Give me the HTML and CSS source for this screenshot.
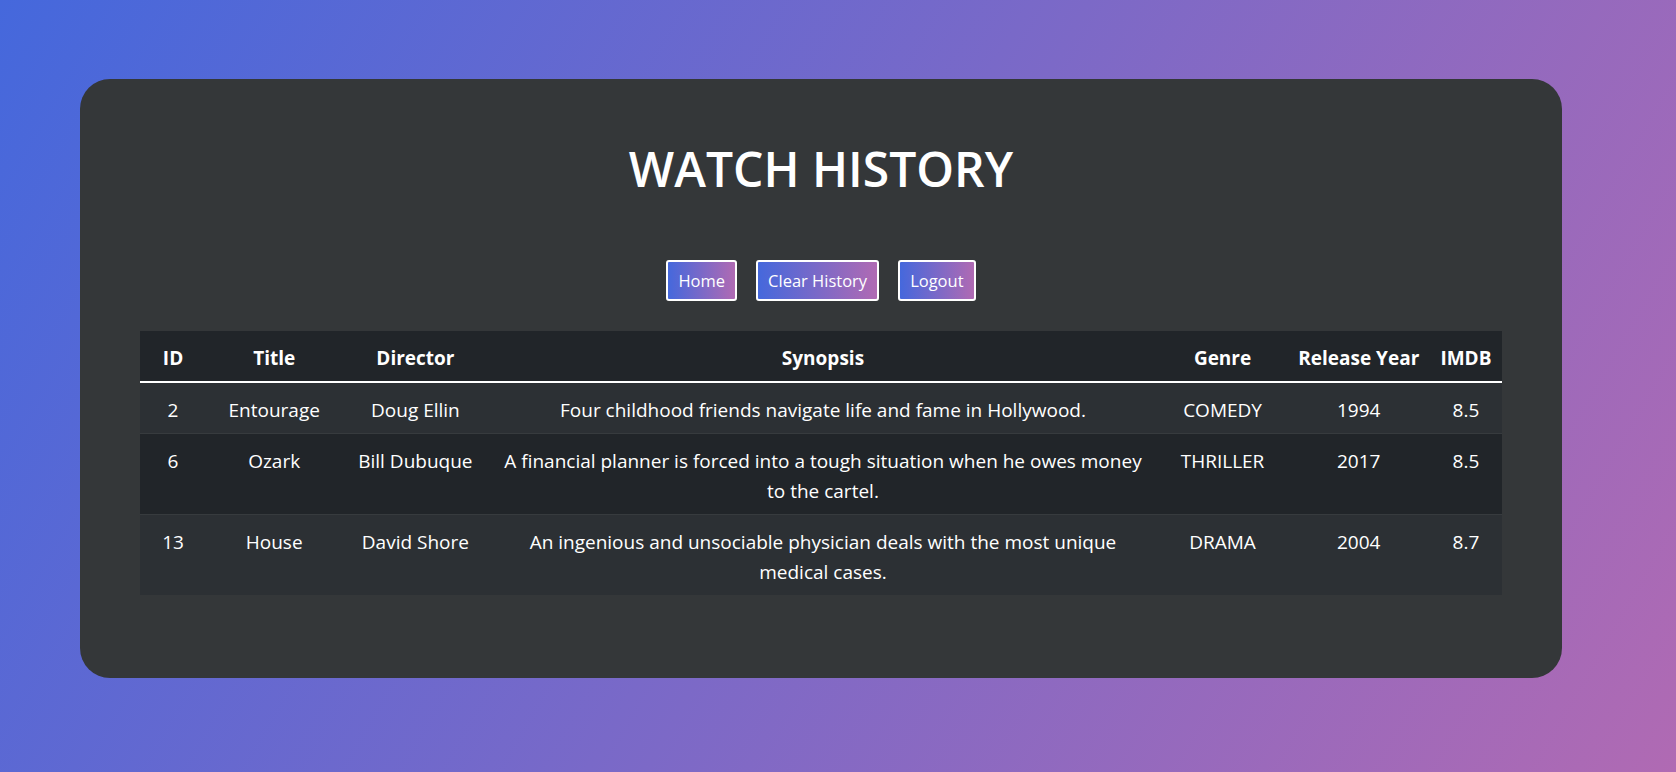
FILE: index.html
```html
<!DOCTYPE html>
<html lang="en">
<head>
  <meta charset="UTF-8" />
  <meta name="viewport" content="width=device-width, initial-scale=1.0" />
  <title>Watch History</title>
  <link rel="stylesheet" href="styles.css">
</head>
<body>
<div class="card">
  <h1>WATCH HISTORY</h1>

  <!-- Navigasi -->
  <div class="actions">
    <button class="btn">Home</button>
    <button class="btn">Clear History</button>
    <button class="btn">Logout</button>
  </div>

  <table class="history">
    <colgroup>
      <col class="c-id"><col class="c-title"><col class="c-dir"><col class="c-syn"><col class="c-genre"><col class="c-year"><col class="c-imdb">
    </colgroup>
    <thead>
      <tr><th>ID</th><th>Title</th><th>Director</th><th>Synopsis</th><th>Genre</th><th>Release Year</th><th>IMDB</th></tr>
    </thead>
    <tbody>
      <tr><td>2</td><td>Entourage</td><td>Doug Ellin</td><td class="syn">Four childhood friends navigate life and fame in Hollywood.</td><td>COMEDY</td><td>1994</td><td>8.5</td></tr>
      <tr><td>6</td><td>Ozark</td><td>Bill Dubuque</td><td class="syn">A financial planner is forced into a tough situation when he owes money to the cartel.</td><td>THRILLER</td><td>2017</td><td>8.5</td></tr>
      <tr><td>13</td><td>House</td><td>David Shore</td><td class="syn">An ingenious and unsociable physician deals with the most unique medical cases.</td><td>DRAMA</td><td>2004</td><td>8.7</td></tr>
    </tbody>
  </table>
</div>
</body>
</html>
```

FILE: styles.css
```css
html, body { height: 100%; }
body { margin: 0; padding: 79px 0 0 80px; box-sizing: border-box; font-family: "Open Sans", "Noto Sans", sans-serif; color: #fff; background: linear-gradient(120deg, #4568dc 0%, #b06ab3 100%); }
.card { width: 1482px; box-sizing: border-box; padding: 60px 60px 83px; background: #343739; border-radius: 30px; }
h1 { margin: 0 0 61px; font-size: 48px; font-weight: 600; line-height: 60px; text-align: center; }
.actions { display: flex; justify-content: center; gap: 19px; margin-bottom: 30px; }
.btn { font-family: inherit; font-size: 16.5px; line-height: 27px; padding: 5px 10px; color: #fff; border: 2px solid #fff; border-radius: 3px; background: linear-gradient(to right, #4568dc, #b06ab3); cursor: pointer; }
.history { width: 100%; border-collapse: collapse; table-layout: fixed; font-size: 19px; line-height: 30px; }
.c-id { width: 66px; } .c-title { width: 136px; } .c-dir { width: 146px; } .c-syn { width: 668px; }
.c-genre { width: 130px; } .c-year { width: 142px; } .c-imdb { width: 72px; }
th, td { padding: 12px 10px 8px; text-align: center; vertical-align: top; white-space: nowrap; }
td.syn { white-space: normal; }
th { background: #212529; font-weight: 700; border-bottom: 2px solid #fff; }
td { border-top: 1px solid #373b3e; }
tbody tr:first-child td { border-top: none; }
tbody tr:nth-child(odd) { background: #2c3034; }
tbody tr:nth-child(even) { background: #212529; }
```
